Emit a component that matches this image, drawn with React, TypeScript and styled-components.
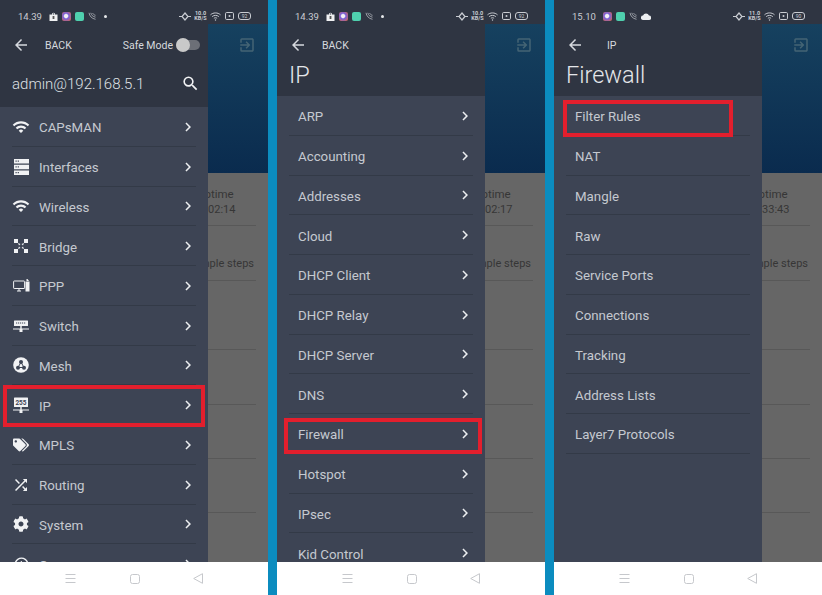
import React from "react";
import styled, { createGlobalStyle } from "styled-components";
import { FaCog, FaTags } from "react-icons/fa";
import {
    MdArrowBack,
    MdChevronRight,
    MdExitToApp,
    MdQueryBuilder,
    MdSearch,
    MdShuffle,
    MdWifi,
} from "react-icons/md";

const GlobalStyle = createGlobalStyle`
    html, body {
        margin: 0;
        padding: 0;
        background: #0b8cbf;
        font-family: Roboto, "Liberation Sans", sans-serif;
    }
`;

const Page = styled.div`
    display: flex;
    gap: 9px;
    width: 822px;
    height: 595px;
    overflow: hidden;
    background: #0b8cbf;
`;

const Phone = styled.div`
    position: relative;
    display: flex;
    flex-direction: column;
    width: 268px;
    height: 595px;
    flex-shrink: 0;
    overflow: hidden;
`;

const Screen = styled.div`
    position: relative;
    flex: 1;
    min-height: 0;
    overflow: hidden;
    background: #666666;
`;

/* the app underneath the drawer */
const TopStrip = styled.div`
    height: 24px;
    background: #2f3542;
`;

const AppBar = styled.div`
    display: flex;
    justify-content: flex-end;
    height: 149px;
    padding: 12px 12px 0 0;
    box-sizing: border-box;
    background: linear-gradient(180deg, #16415f 0%, #0a2b4e 100%);
    color: #446474;
`;

const DashRow = styled.div<{ $height: number }>`
    display: flex;
    flex-direction: column;
    justify-content: center;
    height: ${(p) => p.$height}px;
    margin-right: 12px;
    box-sizing: border-box;
    border-bottom: 1px solid #585858;
    color: #363636;
    font-size: 11px;
`;

const UptimeCell = styled.div`
    margin-left: 193px;
    padding-top: 6px;
    line-height: 15px;
`;

const UptimeLabel = styled.div`
    margin-left: 4px;
    font-size: 11.5px;
`;

const StepsLine = styled.div`
    margin-top: 20px;
    padding-right: 2px;
    text-align: right;
    white-space: nowrap;
`;

/* drawer */
const Drawer = styled.div`
    position: absolute;
    top: 0;
    left: 0;
    bottom: 0;
    width: 208px;
    display: flex;
    flex-direction: column;
    background: #3d4454;
`;

const DrawerHead = styled.div`
    flex-shrink: 0;
    padding-top: 30px;
    background: #2f3542;
    color: #d6d9de;
`;

const BackRow = styled.div`
    display: flex;
    align-items: center;
    height: 30px;
    padding: 0 8px 0 12px;
    font-size: 10.5px;
`;

const BackLabel = styled.span<{ $offset: number }>`
    margin-left: ${(p) => p.$offset}px;
    flex: 1;
`;

const SafeMode = styled.span`
    font-size: 10.5px;
    margin-right: 3px;
`;

const Toggle = styled.span`
    position: relative;
    display: block;
    width: 24px;
    height: 10px;
    border-radius: 5px;
    background: #6c6f77;
`;

const ToggleKnob = styled.span`
    position: absolute;
    top: -2px;
    left: 0;
    width: 14px;
    height: 14px;
    border-radius: 50%;
    background: #c9c9c9;
`;

const AccountRow = styled.div`
    display: flex;
    align-items: center;
    justify-content: space-between;
    height: 47px;
    padding: 0 8px 0 12px;
    font-size: 15px;
    font-weight: 300;
    color: #dfe1e5;
`;

const Title = styled.div`
    padding: 0 0 6px 12px;
    font-size: 23.5px;
    line-height: 30px;
    font-weight: 300;
    color: #e4e6ea;
`;

const List = styled.div`
    flex: 1;
    min-height: 0;
    overflow: hidden;
`;

const Row = styled.div`
    position: relative;
    height: 39.75px;
    padding: 0 12px;
`;

const RowInner = styled.div<{ $indent: number }>`
    display: flex;
    align-items: center;
    height: 100%;
    box-sizing: border-box;
    padding: 3px 0 0 ${(p) => p.$indent}px;
    border-bottom: 1px solid #333a47;
    color: #c5c9d0;
    font-size: 13.3px;
`;

const RowIcon = styled.span`
    display: flex;
    justify-content: center;
    align-items: center;
    width: 18px;
    margin: -2px 9px 0 0;
    color: #f1f2f4;
`;

const RowLabel = styled.span`
    flex: 1;
`;

const Chevron = styled.span`
    display: flex;
    margin: -2px -1px 0 0;
    color: #eceef0;
`;

const Highlight = styled.div<{ $left: number; $right: number; $top: number; $bottom: number }>`
    position: absolute;
    left: ${(p) => p.$left}px;
    right: ${(p) => p.$right}px;
    top: ${(p) => p.$top}px;
    bottom: ${(p) => p.$bottom}px;
    border: 4px solid #e31f2d;
    box-sizing: border-box;
    pointer-events: none;
`;

/* status bar, over both the drawer and the app */
const StatusBar = styled.div`
    position: absolute;
    top: 9px;
    left: 18px;
    right: 17px;
    z-index: 2;
    display: flex;
    align-items: center;
    height: 14px;
    color: #c9ccd2;
    font-size: 9.5px;
`;

const StatusTime = styled.span`
    margin-right: 7px;
`;

const StatusLeft = styled.div`
    display: flex;
    align-items: center;
    gap: 4px;
    flex: 1;
`;

const StatusRight = styled.div`
    display: flex;
    align-items: center;
    gap: 4px;
`;

const AppBadge = styled.span<{ $bg: string }>`
    display: block;
    width: 9px;
    height: 9px;
    border-radius: 2px;
    background: ${(p) => p.$bg};
`;

const StatusDot = styled.span`
    display: block;
    width: 3px;
    height: 3px;
    margin-left: 4px;
    border-radius: 50%;
    background: #e6e8ea;
`;

const Speed = styled.span`
    display: flex;
    flex-direction: column;
    align-items: center;
    width: 11px;
    font-size: 5.5px;
    line-height: 5.5px;
    font-weight: 700;
`;

const Battery = styled.span`
    display: block;
    width: 13px;
    height: 8px;
    border: 1px solid #c9ccd2;
    border-radius: 3px;
    box-sizing: border-box;
    font-size: 5px;
    line-height: 6px;
    text-align: center;
`;

const NavBar = styled.div`
    display: flex;
    align-items: center;
    justify-content: space-between;
    height: 33px;
    flex-shrink: 0;
    padding: 0 65px 0 65px;
    box-sizing: border-box;
    background: #ffffff;
    color: #c6c8cc;
`;

const BridgeIcon = () => (
    <svg width="16" height="16" viewBox="0 0 16 16" fill="currentColor">
        <rect x="1" y="1" width="4" height="4" />
        <rect x="11" y="1" width="4" height="4" />
        <rect x="1" y="11" width="4" height="4" />
        <rect x="11" y="11" width="4" height="4" />
        <path d="M5 5l2.5 1-1.5 1.5zM11 5l-2.5 1 1.5 1.5zM5 11l2.5-1-1.5-1.5zM11 11l-2.5-1 1.5-1.5z" />
    </svg>
);

const InterfacesIcon = () => (
    <svg width="15" height="16" viewBox="0 0 15 16">
        <path fill="currentColor" d="M0 0h15v4.5H0zM0 5.7h15v4.5H0zM0 11.4h15V16H0z" />
        <path fill="#3d4454" d="M1.5 1.6h1.2v1.2H1.5zM3.7 1.6h1.2v1.2H3.7zM1.5 7.3h1.2v1.2H1.5zM3.7 7.3h1.2v1.2H3.7zM1.5 13h1.2v1.2H1.5zM3.7 13h1.2v1.2H3.7z" />
    </svg>
);

const PppIcon = () => (
    <svg width="17" height="13" viewBox="0 0 17 13" fill="none" stroke="currentColor">
        <rect x="0.6" y="2" width="11" height="7.5" rx="0.6" />
        <path d="M4 12h4M6 10v2" />
        <path fill="currentColor" stroke="none" d="M12.5 2.5h4V12.5h-4zM13.5 0h1l1.5 2h-2.5z" />
    </svg>
);

const SwitchIcon = () => (
    <svg width="16" height="12" viewBox="0 0 16 12">
        <rect x="1" y="0.5" width="14" height="5.5" rx="0.5" fill="currentColor" />
        <path fill="#3d4454" d="M3 2.4h1.2v1.2H3zM5 2.4h1.2v1.2H5zM7 2.4h1.2v1.2H7zM9 2.4h1.2v1.2H9zM11 2.4h1.2v1.2H11z" />
        <path fill="currentColor" d="M7.3 6h1.4v2.5H16v1H9.5V12h-3V9.5H0v-1h7.3z" />
    </svg>
);

const MeshIcon = () => (
    <svg width="16" height="16" viewBox="0 0 16 16">
        <circle cx="8" cy="8" r="7.8" fill="currentColor" />
        <path d="M8 5.2L5 10.5h6z" fill="none" stroke="#3d4454" strokeWidth="1" />
        <circle cx="8" cy="5" r="2" fill="#3d4454" />
        <circle cx="5" cy="10.7" r="2" fill="#3d4454" />
        <circle cx="11" cy="10.7" r="2" fill="#3d4454" />
    </svg>
);

const IpIcon = () => (
    <svg width="16" height="16" viewBox="0 0 16 16">
        <rect x="1" y="0.5" width="14" height="9.5" rx="0.6" fill="currentColor" />
        <text x="8" y="8" fontSize="6.5" fontWeight="700" textAnchor="middle" fontFamily="Roboto, sans-serif" fill="#3d4454">
            255
        </text>
        <path fill="currentColor" d="M7.3 10h1.4v2.5H16v1H9.5V16h-3v-2.5H0v-1h7.3z" />
    </svg>
);

const LinkIcon = () => (
    <svg width="12" height="9" viewBox="0 0 12 9" fill="none" stroke="currentColor" strokeWidth="1.2">
        <path d="M6 1l3 3.5L6 8 3 4.5z" />
        <path d="M0 4.5h3M9 4.5h3" />
    </svg>
);

const StatusWifi = () => (
    <svg width="11" height="9" viewBox="0 0 11 9" fill="none" stroke="currentColor" strokeWidth="1">
        <path d="M0.5 2.8C3.2 0.3 7.8 0.3 10.5 2.8M2.2 4.6C4 3 7 3 8.8 4.6M3.9 6.3C4.8 5.6 6.2 5.6 7.1 6.3" />
        <circle cx="5.5" cy="8" r="0.7" fill="currentColor" stroke="none" />
    </svg>
);

const StatusCast = () => (
    <svg width="9" height="8" viewBox="0 0 9 8" fill="none" stroke="currentColor">
        <rect x="0.5" y="0.5" width="8" height="7" rx="1.2" />
        <circle cx="4.5" cy="4" r="1" fill="currentColor" stroke="none" />
    </svg>
);

const StatusBag = () => (
    <svg width="9" height="9" viewBox="0 0 9 9">
        <path fill="#f0f1f2" d="M0.5 2.5h8V9h-8zM3 2.5V1.5Q4.5-0.2 6 1.5v1H5.2v-.8Q4.5 0.8 3.8 1.7v.8z" />
        <path fill="#555" d="M3.6 4h1.8v3H3.6z" />
    </svg>
);

const StatusCall = () => (
    <svg width="8" height="8" viewBox="0 0 8 8" fill="none" stroke="#b5b9bf" strokeWidth="0.8">
        <path d="M1 0.8C1.5 4 3.5 6.5 7.5 7.3M2.8 0.8C3.2 3 4.8 4.6 7.5 5.2M4.6 1C5 2 6 3 7.5 3.3" />
    </svg>
);

const StatusCloud = () => (
    <svg width="10" height="7" viewBox="0 0 10 7" fill="#eceef0">
        <path d="M2.2 7A2.2 2.2 0 0 1 2 2.6 3.2 3.2 0 0 1 8 2.6 2.2 2.2 0 0 1 8 7z" />
    </svg>
);

const MenuGlyph = () => (
    <svg width="11" height="9" viewBox="0 0 11 9" stroke="currentColor">
        <path d="M0.5 0.5h10M0.5 4.5h10M0.5 8.5h10" />
    </svg>
);

const HomeGlyph = () => (
    <svg width="10" height="10" viewBox="0 0 10 10" fill="none" stroke="currentColor">
        <rect x="0.5" y="0.5" width="9" height="9" rx="2" />
    </svg>
);

const BackGlyph = () => (
    <svg width="10" height="11" viewBox="0 0 10 11" fill="none" stroke="currentColor">
        <path d="M9.5 0.7V10.3L0.7 5.5z" />
    </svg>
);

type MenuItem = { label: string; icon?: React.ReactNode };

type Box = { left: number; right: number; top: number; bottom: number };

const mainMenu: MenuItem[] = [
    { label: "CAPsMAN", icon: <MdWifi size={20} /> },
    { label: "Interfaces", icon: <InterfacesIcon /> },
    { label: "Wireless", icon: <MdWifi size={20} /> },
    { label: "Bridge", icon: <BridgeIcon /> },
    { label: "PPP", icon: <PppIcon /> },
    { label: "Switch", icon: <SwitchIcon /> },
    { label: "Mesh", icon: <MeshIcon /> },
    { label: "IP", icon: <IpIcon /> },
    { label: "MPLS", icon: <FaTags size={16} /> },
    { label: "Routing", icon: <MdShuffle size={18} /> },
    { label: "System", icon: <FaCog size={16} /> },
    { label: "Queues", icon: <MdQueryBuilder size={17} /> },
];

const ipMenu: MenuItem[] = [
    "ARP",
    "Accounting",
    "Addresses",
    "Cloud",
    "DHCP Client",
    "DHCP Relay",
    "DHCP Server",
    "DNS",
    "Firewall",
    "Hotspot",
    "IPsec",
    "Kid Control",
].map((label) => ({ label }));

const firewallMenu: MenuItem[] = [
    "Filter Rules",
    "NAT",
    "Mangle",
    "Raw",
    "Service Ports",
    "Connections",
    "Tracking",
    "Address Lists",
    "Layer7 Protocols",
].map((label) => ({ label }));

const dashHeights = [53, 55, 69, 55, 54, 54];

interface PhoneViewProps {
    time: string;
    speed: string;
    battery: string;
    uptime: string;
    showBag: boolean;
    backLabel: string;
    backOffset: number;
    title?: string;
    items: MenuItem[];
    chevrons: boolean;
    marked: string;
    box: Box;
}

function PhoneView({ time, speed, battery, uptime, showBag, backLabel, backOffset, title, items, chevrons, marked, box }: PhoneViewProps) {
    return (
        <Phone>
            <StatusBar>
                <StatusTime>{time}</StatusTime>
                <StatusLeft>
                    {showBag && <StatusBag />}
                    <AppBadge $bg="radial-gradient(circle at 45% 45%, #f4f0f4 0 22%, #7a62d8 40%, #e8683a 100%)" />
                    <AppBadge $bg="#4fd0ae" />
                    <StatusCall />
                    {showBag ? <StatusDot /> : <StatusCloud />}
                </StatusLeft>
                <StatusRight>
                    <LinkIcon />
                    <Speed>
                        <span>{speed}</span>
                        <span>KB/S</span>
                    </Speed>
                    <StatusWifi />
                    <StatusCast />
                    <Battery>{battery}</Battery>
                </StatusRight>
            </StatusBar>
            <Screen>
                <TopStrip />
                <AppBar>
                    <MdExitToApp size={18} />
                </AppBar>
                <DashRow $height={dashHeights[0]}>
                    <UptimeCell>
                        <UptimeLabel>Uptime</UptimeLabel>
                        <div>{uptime}</div>
                    </UptimeCell>
                </DashRow>
                <DashRow $height={dashHeights[1]}>
                    <StepsLine>Quick set up in a few simple steps</StepsLine>
                </DashRow>
                {dashHeights.slice(2).map((height, i) => (
                    <DashRow key={i} $height={height} />
                ))}
                <Drawer>
                    <DrawerHead>
                        <BackRow>
                            <MdArrowBack size={18} />
                            <BackLabel $offset={backOffset}>{backLabel}</BackLabel>
                            {!title && <SafeMode>Safe Mode</SafeMode>}
                            {!title && (
                                <Toggle>
                                    <ToggleKnob />
                                </Toggle>
                            )}
                        </BackRow>
                        {title ? (
                            <Title>{title}</Title>
                        ) : (
                            <AccountRow>
                                admin@192.168.5.1
                                <MdSearch size={19} color="#f2f3f5" />
                            </AccountRow>
                        )}
                    </DrawerHead>
                    <List>
                        {items.map((item) => (
                            <Row key={item.label}>
                                <RowInner $indent={item.icon ? 0 : 9}>
                                    {item.icon && <RowIcon>{item.icon}</RowIcon>}
                                    <RowLabel>{item.label}</RowLabel>
                                    {chevrons && (
                                        <Chevron>
                                            <MdChevronRight size={18} />
                                        </Chevron>
                                    )}
                                </RowInner>
                                {item.label === marked && (
                                    <Highlight $left={box.left} $right={box.right} $top={box.top} $bottom={box.bottom} />
                                )}
                            </Row>
                        ))}
                    </List>
                </Drawer>
            </Screen>
            <NavBar>
                <MenuGlyph />
                <HomeGlyph />
                <BackGlyph />
            </NavBar>
        </Phone>
    );
}

export default function App() {
    return (
        <Page>
            <GlobalStyle />
            <PhoneView
                time="14.39"
                speed="10.0"
                battery="92"
                uptime="00:02:14"
                showBag
                backLabel="BACK"
                backOffset={15}
                items={mainMenu}
                chevrons
                marked="IP"
                box={{ left: 3, right: 3, top: 0, bottom: -2 }}
            />
            <PhoneView
                time="14.39"
                speed="10.0"
                battery="92"
                uptime="00:02:17"
                showBag
                backLabel="BACK"
                backOffset={15}
                title="IP"
                items={ipMenu}
                chevrons
                marked="Firewall"
                box={{ left: 7, right: 3, top: 4, bottom: 0 }}
            />
            <PhoneView
                time="15.10"
                speed="11.0"
                battery="90"
                uptime="00:33:43"
                showBag={false}
                backLabel="IP"
                backOffset={23}
                title="Firewall"
                items={firewallMenu}
                chevrons={false}
                marked="Filter Rules"
                box={{ left: 9, right: 29, top: 4, bottom: -1 }}
            />
        </Page>
    );
}
